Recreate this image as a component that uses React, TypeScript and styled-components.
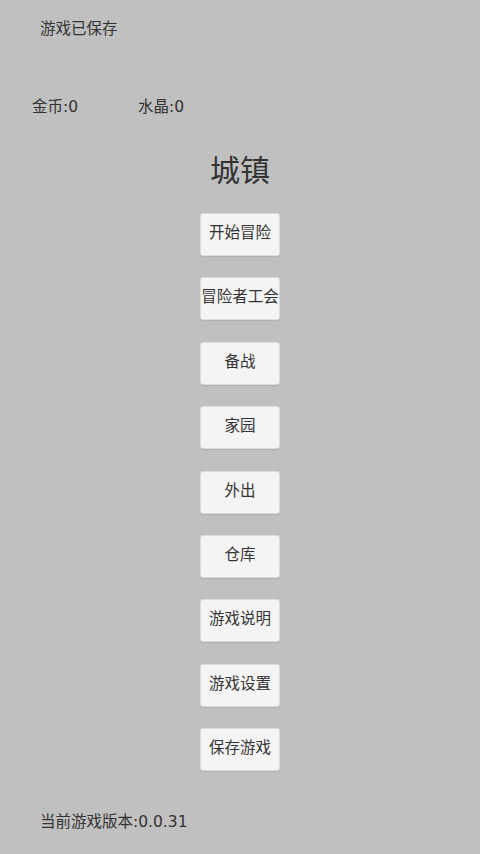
import { FC } from "react";
import styled, { createGlobalStyle } from "styled-components";

const GlobalStyle = createGlobalStyle`
  html, body {
    margin: 0;
    padding: 0;
    background: #c0c0c0;
  }
  body {
    font-family: "DejaVu Sans", "Noto Sans CJK SC", sans-serif;
    color: #333;
  }
`;

const Page = styled.div`
  width: 480px;
  height: 854px;
  display: flex;
  flex-direction: column;
  box-sizing: border-box;
`;

const Status = styled.div`
  padding: 18px 0 0 40px;
  height: 22px;
  font-size: 15.5px;
  line-height: 22px;
`;

const Wallet = styled.div`
  display: flex;
  gap: 60px;
  margin-top: 56px;
  padding-left: 32px;
  font-size: 15.5px;
  line-height: 22px;
`;

const Title = styled.h1`
  margin: 33px 0 0;
  text-align: center;
  font-size: 30px;
  font-weight: 400;
  line-height: 40px;
`;

const Menu = styled.div`
  display: flex;
  flex-direction: column;
  align-items: center;
  gap: 21.4px;
  margin-top: 22px;
`;

const MenuButton = styled.button`
  width: 80px;
  height: 43px;
  padding: 0 0 3px;
  border: 1px solid #dcdcdc;
  border-radius: 3px;
  background: #f4f4f4;
  color: #333;
  font-family: inherit;
  font-size: 15.5px;
  line-height: 20px;
  white-space: nowrap;
  box-shadow: 0 1px 1px rgba(0, 0, 0, 0.08);
`;

const Version = styled.div`
  margin-top: auto;
  padding: 0 0 21px 40px;
  font-size: 15.5px;
  line-height: 22px;
`;

const items = [
  "开始冒险",
  "冒险者工会",
  "备战",
  "家园",
  "外出",
  "仓库",
  "游戏说明",
  "游戏设置",
  "保存游戏",
];

const App: FC = () => (
  <>
    <GlobalStyle />
    <Page>
      <Status>游戏已保存</Status>
      <Wallet>
        <span>金币:0</span>
        <span>水晶:0</span>
      </Wallet>
      <Title>城镇</Title>
      <Menu>
        {items.map((label) => (
          <MenuButton key={label}>{label}</MenuButton>
        ))}
      </Menu>
      <Version>当前游戏版本:0.0.31</Version>
    </Page>
  </>
);

export default App;
